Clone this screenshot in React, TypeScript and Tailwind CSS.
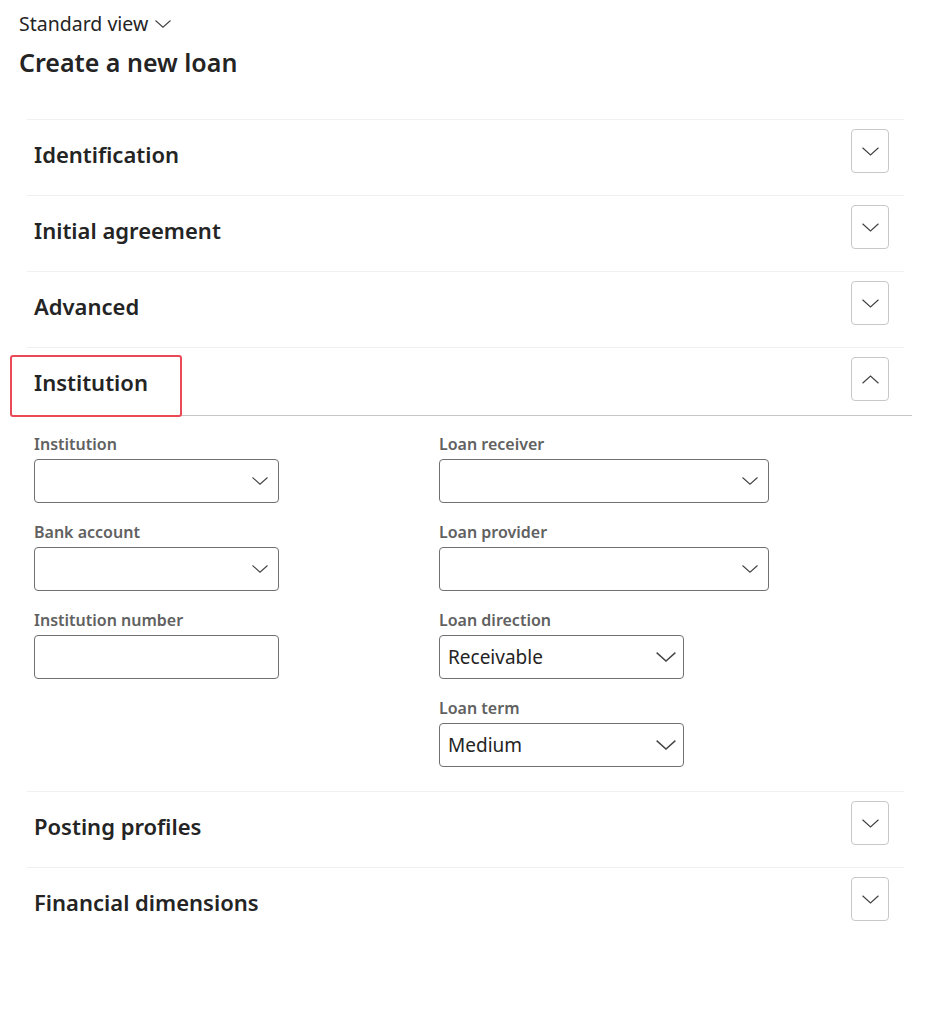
import React from 'react';

const FONT = { fontFamily: '"Segoe UI", "Noto Sans", "Open Sans", sans-serif' };

function Chevron({ up = false, className = '' }: { up?: boolean; className?: string }) {
  return (
    <svg className={className} viewBox="0 0 16 8" fill="none" stroke="#424242" strokeWidth={1.1}>
      {up ? <path d="M0.5 7.5L8 0.8L15.5 7.5" /> : <path d="M0.5 0.5L8 7.2L15.5 0.5" />}
    </svg>
  );
}

function ToggleButton({ up = false }: { up?: boolean }) {
  return (
    <button className="mt-[9px] w-[38px] h-[44px] rounded-[4px] border border-[#c8c8c8] bg-white flex items-center justify-center">
      <Chevron up={up} className="w-[17px] h-[9px]" />
    </button>
  );
}

function SectionRow({ title }: { title: string }) {
  return (
    <div className="h-[76px] border-t border-[#f0f0f0] flex items-start justify-between pl-[7px] pr-[15px]">
      <h2 className="mt-[20px] text-[22px] leading-[28px] font-semibold text-[#242424]">{title}</h2>
      <ToggleButton />
    </div>
  );
}

type FieldProps = {
  label: string;
  width: string;
  value?: string;
  select?: boolean;
};

function Field({ label, width, value, select = true }: FieldProps) {
  return (
    <div className="flex flex-col">
      <label className="text-[16px] leading-[20px] font-semibold text-[#616161] mb-[5px]">{label}</label>
      <div className={`${width} h-[44px] rounded-[4px] border border-[#707070] bg-white flex items-center justify-between pl-[8px] pr-[8px]`}>
        <span className="text-[19px] text-[#242424]">{value ?? ''}</span>
        {select &&
          (value ? (
            <Chevron className="w-[20px] h-[10px] mr-[-1px]" />
          ) : (
            <Chevron className="w-[16px] h-[8px] mr-[2px]" />
          ))}
      </div>
    </div>
  );
}

export default function App() {
  return (
    <div className="min-h-[1010px] w-[928px] bg-white text-[#242424]" style={FONT}>
      <div className="pl-[19px] pt-[11px]">
        <div className="flex items-center gap-[7px] text-[19.5px] leading-[26px] text-[#242424]">
          Standard view
          <Chevron className="w-[16px] h-[8px]" />
        </div>
        <h1 className="mt-[9px] text-[25px] leading-[32px] font-semibold">Create a new loan</h1>
      </div>

      <div className="ml-[27px] w-[877px] mt-[41px]">
        <SectionRow title="Identification" />
        <SectionRow title="Initial agreement" />
        <SectionRow title="Advanced" />

        {/* expanded section */}
        <div className="relative border-t border-[#f0f0f0]">
          <div className="h-[67px] flex items-start justify-between pl-[7px] pr-[15px]">
            <h2 className="mt-[20px] text-[22px] leading-[28px] font-semibold">Institution</h2>
            <ToggleButton up />
          </div>
          <div className="ml-[-11px] mr-[-8px] border-t border-[#c8c6c4]" />
          <div className="absolute left-[-17px] top-[7px] w-[172px] h-[62px] rounded-[3px] border-2 border-[#ea4a57]" />

          <div className="pl-[7px] pt-[18px] pb-[24px] grid grid-cols-[405px_1fr]">
            <div className="flex flex-col gap-[19px]">
              <Field label="Institution" width="w-[245px]" />
              <Field label="Bank account" width="w-[245px]" />
              <Field label="Institution number" width="w-[245px]" select={false} />
            </div>
            <div className="flex flex-col gap-[19px]">
              <Field label="Loan receiver" width="w-[330px]" />
              <Field label="Loan provider" width="w-[330px]" />
              <Field label="Loan direction" width="w-[245px]" value="Receivable" />
              <Field label="Loan term" width="w-[245px]" value="Medium" />
            </div>
          </div>
        </div>

        <SectionRow title="Posting profiles" />
        <SectionRow title="Financial dimensions" />
      </div>
    </div>
  );
}
